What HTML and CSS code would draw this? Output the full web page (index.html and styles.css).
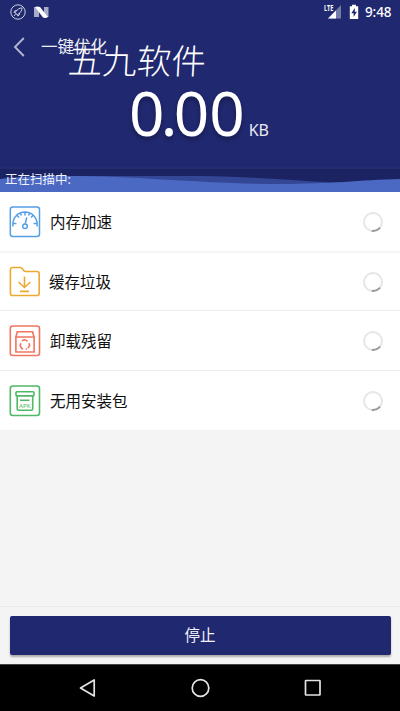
FILE: index.html
```html
<!DOCTYPE html>
<html lang="zh-CN">
<head>
<meta charset="utf-8">
<title>一键优化</title>
<link rel="stylesheet" href="styles.css">
</head>
<body>
<div class="screen">
  <header class="hero">
    <div class="status">
      <svg class="rocket" width="16" height="16" viewBox="0 0 16 16" fill="none" stroke="#d0d2e2" stroke-width="1"><circle cx="8" cy="8" r="7.2"/><path d="M5.900 9.900L5.200 8.200 8.400 5Q10 3.900 12.100 3.900 12 6 10.800 7.700L7.700 10.800ZM6.900 6.300L4.700 6.900 3.900 8.300 5.300 8.200M9.700 9L9.200 11 7.700 12 7.700 10.800M5.500 10.200L4 12"/></svg>
      <svg width="15" height="13" viewBox="0 0 15 13"><path fill="#a9acc9" d="M0 1h5v10H0zM10 1h4.500v10H10z"/><path fill="#fff" d="M1 1Q3.500 0 6 1L14 11Q11.500 12.500 9 11.500Z"/></svg>
      <span class="gap"></span>
      <svg class="signal" width="18" height="16" viewBox="0 0 18 16"><path fill="#747ba9" d="M17 1v13.500H4z"/><path fill="#fff" d="M12 6.500V14.500H4z"/><text x="0" y="7" class="lte" textLength="9.300" lengthAdjust="spacingAndGlyphs">LTE</text></svg>
      <svg class="battery" width="10" height="16" viewBox="0 0 10 16"><path fill="#fff" d="M3 .8h4v1.500h2.200V15H.8V2.300H3z"/><path fill="#20286f" d="M5.800 4L2.300 9.200H4.600V13L7.900 7.700H5.800z"/></svg>
      <span class="clock">9:48</span>
    </div>
    <div class="title-bar">
      <svg width="12" height="20" viewBox="0 0 12 20" fill="none" stroke="#b3b6d0" stroke-width="1.900"><path d="M10.800 1L2 10 10.800 19"/></svg>
      <h1>一键优化</h1>
      <span class="watermark">五九软件</span>
    </div>
    <div class="amount"><span class="number"><span class="whole">0.</span>00</span><span class="unit">KB</span></div>
    <div class="scan">
      <svg class="waves" width="400" height="25" viewBox="0 0 400 25"><path fill="#252b70" d="M0 0h400v2H0z"/><path fill="#1c2363" d="M0 2h400v23H0z"/><path fill="#344796" d="M80 9H200C260 10 300 14 340 16L400 25H80Z"/><path fill="#4b68c2" d="M0 12C15 10 30 9 60 9C140 8.500 200 17 280 17C330 17 360 13 400 12V25H0Z"/></svg>
      <span>正在扫描中:</span>
    </div>
  </header>
  <main>
    <ul class="list">
      <li class="wide">
        <svg width="32" height="32" viewBox="0 0 32 32" fill="none" stroke="#559fe6" stroke-width="1.500"><rect x="1.300" y="1" width="29.200" height="29.500" rx="2.500"/><path d="M3.900 20.500V18A12.100 12.100 0 0 1 28.100 18V20.500M3.900 17.500H7.400M24.600 17.500H28.100M7.600 9L10 11.500M24.400 9L22 11.500M16 5.700V9.500M11.200 6.900L12.400 9.500M20.800 6.900L19.600 9.500M16.200 17.700L17.800 11.500"/><circle cx="16" cy="20.200" r="2.300"/></svg>
        <span class="name">内存加速</span><i class="spinner"></i>
      </li>
      <li class="second">
        <svg width="32" height="32" viewBox="0 0 32 32" fill="none" stroke="#ebaa32" stroke-width="1.600"><path d="M3.600 1.500H11.300Q12.200 1.500 12.900 2.300L15 4.700Q15.600 5.500 16.700 5.500H28Q30.200 5.500 30.200 7.800V27.200Q30.200 29.500 28 29.500H3.500Q1.400 29.500 1.400 27.200V3.700Q1.400 1.500 3.600 1.500Z"/><path d="M15.500 10.500V21.200M9.600 16L15.500 21.500 21.400 16M11 25.400H20"/></svg>
        <span class="name shifted">缓存垃圾</span><i class="spinner"></i>
      </li>
      <li>
        <svg width="32" height="32" viewBox="0 0 32 32" fill="none" stroke="#ef765f" stroke-width="1.600"><rect x="1.300" y="1" width="29.200" height="29.500" rx="2.500"/><path d="M6.900 12L8.300 6.700H23.500L25.100 12M6.900 12H25.100V27H6.900Z"/><path d="M12.800 15.700L15.500 14.800 18.600 15.900M19.800 18.300L20.700 20.500 19 23M16.700 24H18.200M12 18.300L11.100 20.500 12.800 23.700H14.200"/></svg>
        <span class="name">卸载残留</span><i class="spinner"></i>
      </li>
      <li>
        <svg width="32" height="32" viewBox="0 0 32 32" fill="none" stroke="#50b966" stroke-width="1.600"><rect x="1.300" y="1" width="29.200" height="29.500" rx="2.500"/><rect x="7" y="6.700" width="18" height="4.200" rx=".8"/><path d="M8.200 11V23.600Q8.200 25.300 9.900 25.300H22Q23.700 25.300 23.700 23.600V11M11 15.300H20.500"/><text class="apk" x="10" y="23" textLength="11.800" lengthAdjust="spacingAndGlyphs">APK</text></svg>
        <span class="name">无用安装包</span><i class="spinner"></i>
      </li>
    </ul>
  </main>
  <footer><button>停止</button></footer>
  <nav>
    <svg width="18" height="20" viewBox="0 0 18 20"><path d="M15.200 1.900V17.900L1.500 9.900Z"/></svg>
    <svg width="20" height="20" viewBox="0 0 20 20"><circle cx="9.500" cy="10" r="8.300"/></svg>
    <svg width="18" height="18" viewBox="0 0 18 18"><rect x="1.500" y="1.500" width="14.500" height="14.500" rx=".5"/></svg>
  </nav>
</div>
</body>
</html>
```
FILE: styles.css
```css
* { box-sizing: border-box; }
body { margin: 0; font-family: "Noto Sans", "Noto Sans CJK SC", sans-serif; }
.screen { width: 400px; height: 711px; display: flex; flex-direction: column; background: #f4f4f4; overflow: hidden; }
svg { display: block; flex: none; }
.hero { height: 192px; background: #20286f; color: #fff; display: flex; flex-direction: column; }
.status { height: 24px; display: flex; align-items: center; padding: 0 8px 0 10px; }
.rocket { margin-right: 8px; }
.gap { flex: 1; }
.signal { margin-right: 7px; overflow: visible; }
.battery { margin-right: 6px; }
.clock { font-size: 13.500px; font-weight: 500; line-height: 24px; width: 27px; white-space: nowrap; letter-spacing: -.1px; }
.lte { font: bold 8px "Noto Sans", sans-serif; fill: #fff; }
.title-bar { position: relative; height: 46px; display: flex; align-items: center; padding-left: 13px; }
h1 { margin: 0 0 0 16px; font-size: 16.500px; line-height: 24px; font-weight: 400; color: #eeeef5; }
.watermark { position: absolute; left: 68px; top: 10px; font-family: "Noto Sans CJK SC", sans-serif; font-size: 34.500px; font-weight: 300; line-height: 50px; white-space: nowrap; transform: skewX(-3deg); }
.amount { height: 97px; display: flex; align-items: baseline; padding-left: 129px; white-space: nowrap; }
.number { font-size: 62px; line-height: 84px; text-shadow: 0 3px 4px rgba(0,0,0,.3); }
.whole { letter-spacing: -3.700px; }
.unit { font-size: 16px; margin-left: 4px; color: #e8e9f2; }
.scan { position: relative; height: 25px; font-size: 12.500px; line-height: 25px; padding-left: 5px; }
.waves { position: absolute; left: 0; top: 0; }
.scan span { position: relative; color: #f0f2fa; }
.list { margin: 0; padding: 0; list-style: none; background: #fff; }
.list li { height: 60px; display: flex; align-items: center; padding: 0 17px 0 9px; border-bottom: 1px solid #ececec; }
.list .wide { border-bottom: 2px solid #f5f5f5; height: 61px; }
.list .second { height: 58px; }
.list li:last-child { border: 0; height: 59px; }
.name { flex: 1; margin-left: 9px; font-size: 15.500px; line-height: 24px; color: #111; }
.shifted { margin-left: 8px; }
.spinner { width: 20px; height: 20px; border: 2px solid #e6e6e6; border-radius: 50%; position: relative; }
.spinner::after { content: ""; position: absolute; inset: -2px; border: 2px solid #999; border-radius: 50%; clip-path: polygon(50% 50%, 90% 85%, 85% 110%, 42% 110%); }
.apk { font: 6px "Noto Sans", sans-serif; fill: #50b966; stroke: none; }
main { flex: 1; }
footer { height: 58px; border-top: 1px solid #e9e9e9; padding: 9px 9.500px; }
button { display: block; width: 100%; height: 39px; border: 0; border-radius: 2px; background: #20286f; color: #f2f3f8; font: 15.500px/39px "Noto Sans", "Noto Sans CJK SC", sans-serif; box-shadow: 0 2px 2px rgba(0,0,0,.3); padding: 0; }
nav { height: 47px; background: #000; border-top: 1px solid #444; display: flex; justify-content: space-between; align-items: center; padding: 0 78px 0 79px; }
nav svg { fill: none; stroke: #e4e4e4; stroke-width: 1.700; stroke-linejoin: round; }
```
